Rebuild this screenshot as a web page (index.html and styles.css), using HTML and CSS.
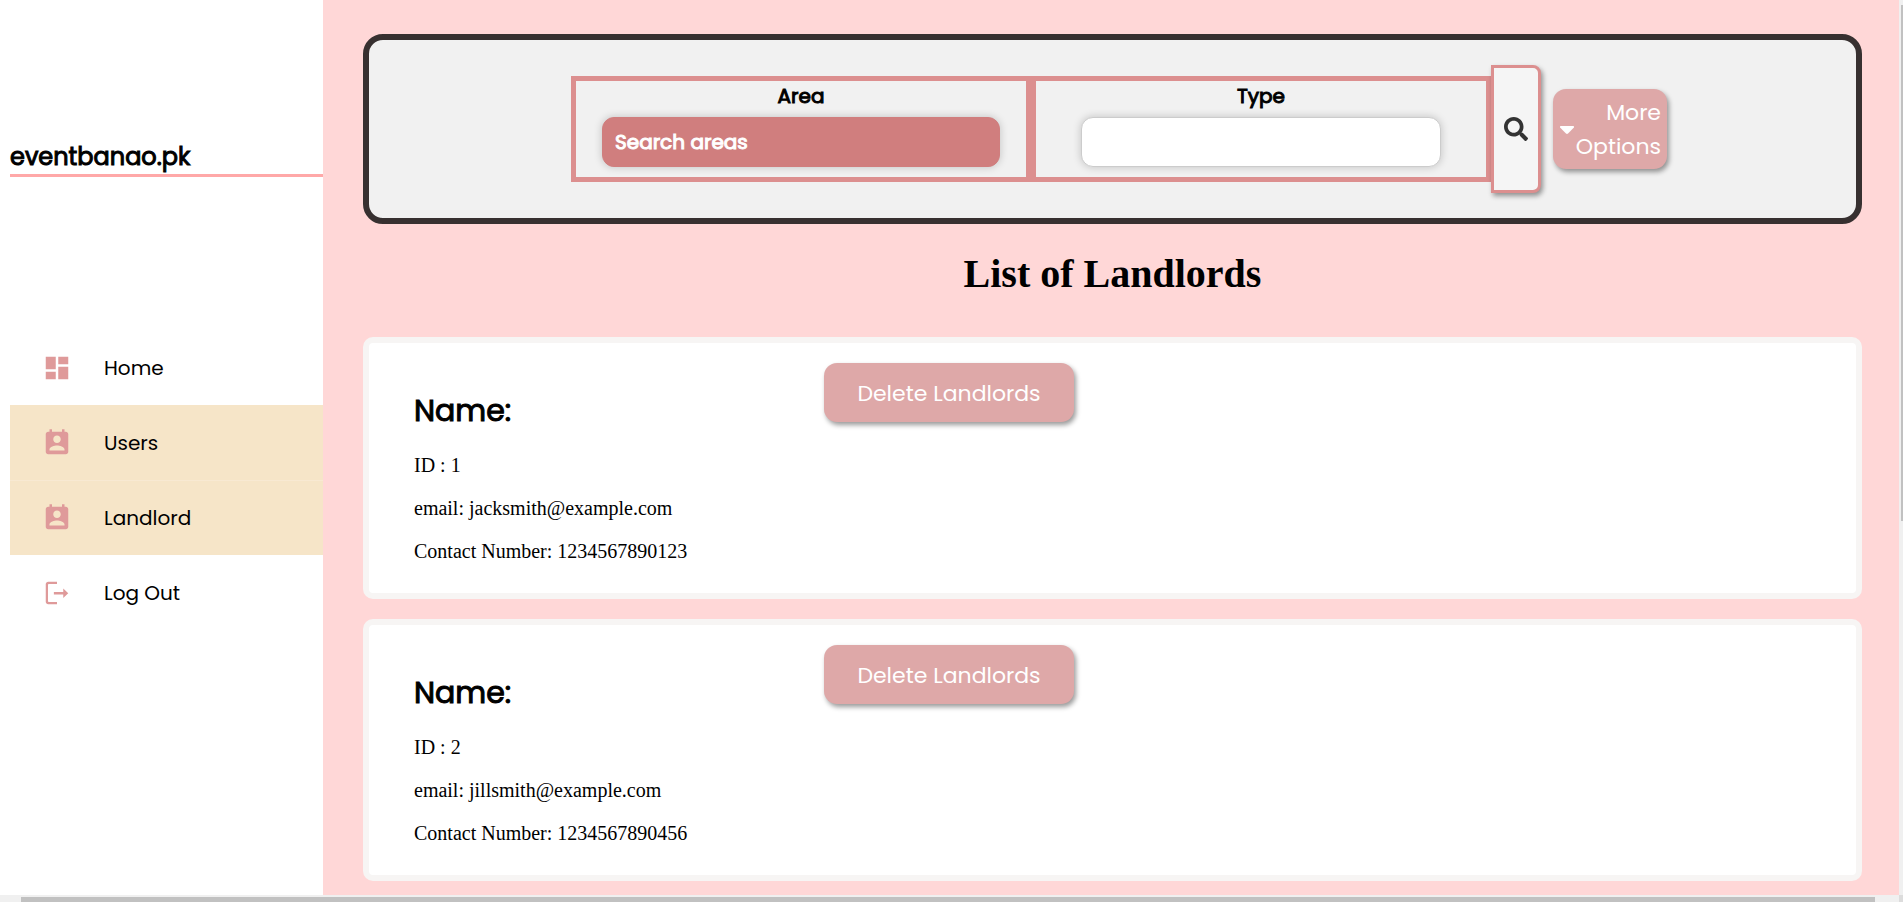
FILE: index.html
```html
<!DOCTYPE html>
<html lang="en">
<head>
<meta charset="utf-8">
<title>eventbanao.pk</title>
<link rel="stylesheet" href="styles.css">
</head>
<body>
<div class="frame">
  <div class="app">
    <aside class="sidebar">
      <div class="brand">eventbanao.pk</div>
      <nav class="menu">
        <a class="menu-item" href="#">
          <svg class="menu-icon" viewBox="0 0 24 24" aria-hidden="true"><path d="M3 13h8V3H3v10zm0 8h8v-6H3v6zm10 0h8V11h-8v10zm0-18v6h8V3h-8z"/></svg>
          <span>Home</span>
        </a>
        <a class="menu-item active" href="#">
          <svg class="menu-icon" viewBox="0 0 24 24" aria-hidden="true"><path d="M19 3h-1V1h-2v2H8V1H6v2H5c-1.11 0-2 .9-2 2v14c0 1.1.89 2 2 2h14c1.1 0 2-.9 2-2V5c0-1.1-.9-2-2-2zm-7 3c1.66 0 3 1.34 3 3s-1.34 3-3 3-3-1.34-3-3 1.34-3 3-3zm6 12H6v-1c0-2 4-3.1 6-3.1s6 1.1 6 3.1v1z"/></svg>
          <span>Users</span>
        </a>
        <a class="menu-item active" href="#">
          <svg class="menu-icon" viewBox="0 0 24 24" aria-hidden="true"><path d="M19 3h-1V1h-2v2H8V1H6v2H5c-1.11 0-2 .9-2 2v14c0 1.1.89 2 2 2h14c1.1 0 2-.9 2-2V5c0-1.1-.9-2-2-2zm-7 3c1.66 0 3 1.34 3 3s-1.34 3-3 3-3-1.34-3-3 1.34-3 3-3zm6 12H6v-1c0-2 4-3.1 6-3.1s6 1.1 6 3.1v1z"/></svg>
          <span>Landlord</span>
        </a>
        <a class="menu-item" href="#">
          <svg class="menu-icon" viewBox="0 0 24 24" aria-hidden="true"><path d="M12 3H5c-1.100 0-2 .9-2 2v14c0 1.100.9 2 2 2h7v-1.800H5.400c-.3 0-.6-.3-.6-.6V5.400c0-.3.3-.6.6-.6H12zM17 8.300v2.800H9.500v2H17v2.800l4-3.800z"/></svg>
          <span>Log Out</span>
        </a>
      </nav>
    </aside>
    <main class="content">
      <form class="search-panel">
        <div class="field">
          <label for="area">Area</label>
          <input class="area-input" id="area" type="text" placeholder="Search areas">
        </div>
        <div class="field">
          <label for="type">Type</label>
          <input class="type-input" id="type" type="text">
        </div>
        <button class="search-button" type="button" aria-label="Search">
          <svg viewBox="0 0 512 512" aria-hidden="true"><path d="M505 442.700L405.300 343c-4.500-4.500-10.600-7-17-7H372c27.600-35.300 44-79.700 44-128C416 93.100 322.900 0 208 0S0 93.100 0 208s93.100 208 208 208c48.300 0 92.700-16.400 128-44v16.300c0 6.400 2.500 12.500 7 17l99.700 99.700c9.400 9.400 24.600 9.400 33.900 0l28.300-28.300c9.400-9.400 9.400-24.600.1-34zM208 336c-70.700 0-128-57.200-128-128 0-70.700 57.200-128 128-128 70.700 0 128 57.200 128 128 0 70.700-57.200 128-128 128z"/></svg>
        </button>
        <button class="pill more-button" type="button">
          <svg viewBox="0 0 14 8" aria-hidden="true"><path d="M1 0h12c.9 0 1.300 1 .7 1.700L8 7.500c-.6.600-1.400.600-2 0L.3 1.700C-.3 1 .1 0 1 0z"/></svg>
          <span>More Options</span>
        </button>
      </form>
      <h1 class="page-title">List of Landlords</h1>
      <section class="cards">
        <article class="card">
          <div class="details">
            <h2>Name:</h2>
            <p>ID : 1</p>
            <p>email: jacksmith@example.com</p>
            <p>Contact Number: 1234567890123</p>
          </div>
          <button class="pill delete-button" type="button">Delete Landlords</button>
        </article>
        <article class="card">
          <div class="details">
            <h2>Name:</h2>
            <p>ID : 2</p>
            <p>email: jillsmith@example.com</p>
            <p>Contact Number: 1234567890456</p>
          </div>
          <button class="pill delete-button" type="button">Delete Landlords</button>
        </article>
      </section>
    </main>
  </div>
  <div class="bar-vertical"><div class="thumb-vertical"></div></div>
  <div class="bar-horizontal"><div class="thumb-horizontal"></div></div>
  <div class="bar-corner"></div>
</div>
</body>
</html>
```
FILE: styles.css
```css
* {
  box-sizing: border-box;
}

body {
  margin: 0;
  background: #fff;
  color: #000;
  font-family: Poppins, Inter, sans-serif;
}

.frame {
  display: grid;
  grid-template-columns: minmax(0, 1fr) 4px;
  grid-template-rows: 1fr 7px;
  height: 100vh;
  overflow: hidden;
}

.app {
  display: grid;
  grid-template-columns: 323px minmax(0, 1fr);
  min-height: 0;
  overflow: hidden;
}

.sidebar {
  padding: 140px 0 0 10px;
}

.brand {
  border-bottom: 3px solid #ffa8a8;
  font-size: 24px;
  line-height: 34px;
  -webkit-text-stroke: 1px currentColor;
}

.menu {
  padding-top: 153px;
}

.menu-item {
  display: flex;
  align-items: center;
  gap: 32px;
  height: 75px;
  padding-left: 32px;
  color: #000;
  font-size: 20px;
  text-decoration: none;
}

.menu-item.active {
  background: #f6e5c8;
}

.menu-item.active + .menu-item.active {
  box-shadow: inset 0 1px #f8e9d2;
}

.menu-icon {
  width: 30px;
  height: 30px;
  fill: #df9a9a;
}

.content {
  padding: 34px 37px 14px 40px;
  background: #ffd7d7;
}

.search-panel {
  display: flex;
  align-items: center;
  height: 190px;
  padding: 0 189px 0 202px;
  border: 6px solid #373030;
  border-radius: 20px;
  background: #f1f1f1;
}

.field {
  display: flex;
  flex: 1;
  flex-direction: column;
  min-width: 0;
  padding-bottom: 10px;
  border: 5px solid #dc8f8f;
}

.field label {
  padding-bottom: 6px;
  font-size: 20px;
  line-height: 30px;
  text-align: center;
  -webkit-text-stroke: 1px currentColor;
}

.field input {
  min-width: 0;
  height: 50px;
  padding: 0 12px;
  border: 1px solid #ccc;
  border-radius: 12px;
  background: #fff;
  box-shadow: 0 0 8px rgba(0, 0, 0, 0.2);
  font: 400 20px Poppins, Inter, sans-serif;
  -webkit-text-stroke: 1px currentColor;
}

.field .area-input {
  margin: 0 26px;
  border-color: #d07e7e;
  background: #d07e7e;
  color: #fff;
}

.field .type-input {
  margin: 0 45px;
}

.area-input::placeholder {
  color: #fff;
  opacity: 1;
}

.search-button {
  display: flex;
  align-items: center;
  justify-content: center;
  width: 50px;
  height: 128px;
  padding: 0;
  border: 3px solid #dc8f8f;
  border-radius: 0 8px 8px 0;
  background: #f5f5f5;
  box-shadow: 2px 3px 5px rgba(0, 0, 0, 0.4);
}

.search-button svg {
  width: 24px;
  height: 24px;
  fill: #333;
}

.pill {
  padding: 2px 6px 0;
  border: 0;
  border-radius: 13px;
  background: #dea8a8;
  box-shadow: 2px 3px 5px rgba(0, 0, 0, 0.4);
  color: #fff;
  font: 400 22px/34px Poppins, Inter, sans-serif;
}

.more-button {
  display: flex;
  align-items: center;
  width: 114px;
  height: 80px;
  margin-left: 12px;
  padding-left: 7px;
  text-align: right;
}

.more-button svg {
  flex: none;
  width: 14px;
  height: 8px;
  fill: #fff;
}

.more-button span {
  flex: 1;
}

.page-title {
  margin: 27px 0 40px;
  font: 700 40px/46px "Liberation Serif", serif;
  text-align: center;
}

.cards {
  display: grid;
  gap: 20px;
}

.card {
  display: grid;
  grid-template-columns: 410px 1fr;
  align-items: start;
  height: 262px;
  padding: 20px 45px;
  border: 6px solid #f7f5f4;
  border-radius: 10px;
  background: #fff;
}

.details {
  font: 20px/23px "Liberation Serif", serif;
}

.details h2 {
  margin: 25px 0 21px;
  font: 400 30px/45px Poppins, Inter, sans-serif;
  -webkit-text-stroke: 1px currentColor;
}

.details p {
  margin: 0 0 20px;
}

.delete-button {
  justify-self: start;
  width: 250px;
  height: 59px;
}

.bar-vertical {
  padding: 5px 0 0 2px;
  background: #f0f0f0;
}

.thumb-vertical {
  height: 58%;
  background: #c1c1c1;
}

.bar-horizontal {
  padding: 2px 24px 0 21px;
  background: #f0f0f0;
}

.thumb-horizontal {
  height: 5px;
  background: #c1c1c1;
}

.bar-corner {
  background: #dcdcdc;
}
```
